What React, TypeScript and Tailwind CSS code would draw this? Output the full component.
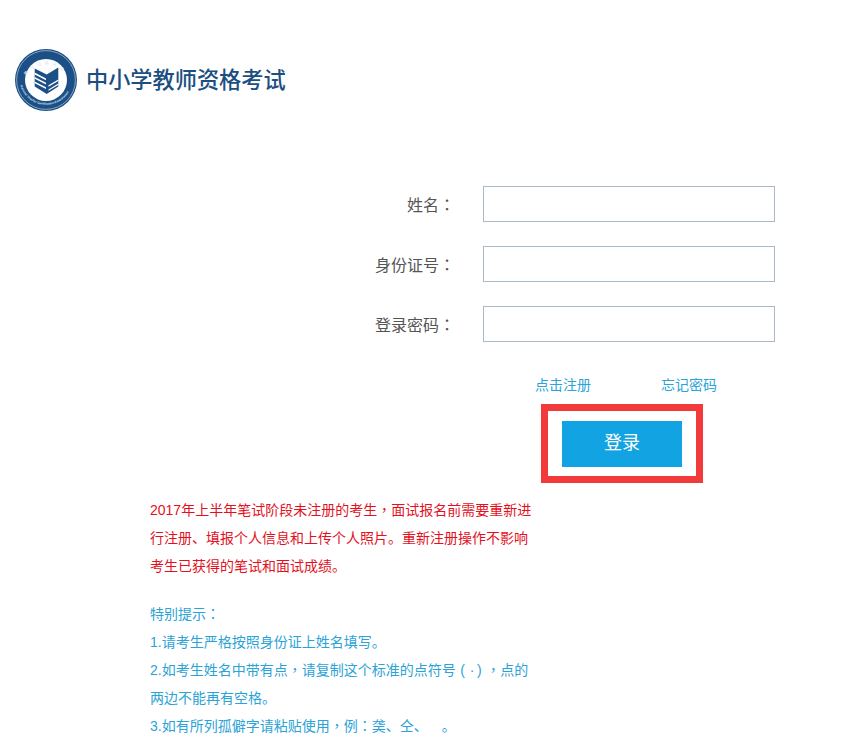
const fieldRows = ["姓名", "身份证号", "登录密码"]

// comma and colon sit centred in the reference, which is how the TC face draws them
function Mark({ children }: { children: string }) {
  return <span className="leading-none font-['Noto_Sans_CJK_TC',sans-serif]">{children}</span>
}

function Logo() {
  return (
    <svg width="64" height="64" viewBox="0 0 64 64" className="shrink-0">
      <circle cx="32" cy="32" r="31" fill="#1c4f86" />
      <circle cx="32" cy="32" r="29.4" fill="none" stroke="#cfdcea" strokeWidth="0.6" />
      <circle cx="32" cy="32" r="21" fill="#fff" />
      <defs>
        <path id="ring-top" d="M 8.5 36 A 24 24 0 0 1 55.5 36" />
        <path id="ring-bottom" d="M 5.5 34 A 26.8 26.8 0 0 0 58.5 34" />
      </defs>
      <text fill="#dbe6f1" fontSize="4.2" fontFamily="'Noto Sans CJK SC', sans-serif" letterSpacing="3.2">
        <textPath href="#ring-top" startOffset="14%">教师资格考试</textPath>
      </text>
      <text fill="#dbe6f1" fontSize="3" fontWeight="700" fontFamily="'Liberation Sans', sans-serif">
        <textPath href="#ring-bottom" startOffset="5%">National Teacher Certification Examination</textPath>
      </text>
      <path d="M20.7 20.6 L32.7 26.5 L44.3 19.6 V38.5 L32.7 46 L20.7 38.5 Z" fill="#1c4f86" />
      <path d="M20.7 24.6 L32 30.4 V32.2 L20.7 26.4 Z M20.7 29 L32 34.8 V36.6 L20.7 30.8 Z M20.7 33.4 L32 39.2 V41 L20.7 35.2 Z" fill="#fff" />
      <path d="M34.5 37.2 L44.3 31.5 V33 L34.5 38.7 Z M34.5 41.4 L44.3 35.6 V37 L34.5 42.8 Z" fill="#fff" />
    </svg>
  )
}

export default function App() {
  return (
    <div className="w-[842px] h-[753px] overflow-hidden bg-white [text-spacing-trim:space-all] font-['Liberation_Sans','Noto_Sans_CJK_SC',sans-serif]">
      <header className="flex items-center pl-[14px] pt-[48px] gap-[8px]">
        <Logo />
        <h1 className="pb-[4px] text-[22.2px] leading-[60px] font-medium text-[#1c4f80] font-['Noto_Sans_CJK_SC',sans-serif]">中小学教师资格考试</h1>
      </header>

      <div className="mt-[74px] flex flex-col gap-[24px]">
        {fieldRows.map((label) => (
          <div key={label} className="flex items-center h-[36px]">
            <label className="w-[455px] pt-[3px] text-right text-[16px] text-[#555555]">
              {label}
              <Mark>：</Mark>
            </label>
            <input className="ml-[28px] w-[292px] h-[36px] border border-[#a9b9c6] bg-white outline-none" />
          </div>
        ))}
      </div>

      <div className="mt-[32px] pl-[535px] flex gap-[70px] text-[14px] leading-[22px] text-[#2ba3d6]">
        <a>点击注册</a>
        <a>忘记密码</a>
      </div>

      <div className="mt-[8px] ml-[541px] w-[162px] h-[79px] border-[7px] border-[#f23a3a] flex items-center justify-center">
        <button className="w-[120px] h-[46px] bg-[#12a3e3] text-white text-[18px]">登录</button>
      </div>

      <div className="mt-[13px] pl-[150px] text-[14px] leading-[28px]">
        <p className="text-[#e3101e]">
          2017年上半年笔试阶段未注册的考生<Mark>，</Mark>面试报名前需要重新进<br />
          行注册、填报个人信息和上传个人照片。重新注册操作不影响<br />
          考生已获得的笔试和面试成绩。
        </p>
        <div className="mt-[20px] text-[#2ba3d6]">
          <p>特别提示<Mark>：</Mark></p>
          <p>1.请考生严格按照身份证上姓名填写。</p>
          <p>
            2.如考生姓名中带有点<Mark>，</Mark>请复制这个标准的点符号
            <span className="inline-block w-[14px] text-center">(</span>
            <span className="tracking-[-2px]">·</span>
            <span className="inline-block w-[14px] text-center">)</span>
            <Mark>，</Mark>点的<br />
            两边不能再有空格。
          </p>
          <p>3.如有所列孤僻字请粘贴使用<Mark>，</Mark>例<Mark>：</Mark>䶮、仝、<span className="inline-block w-[14px]" />。</p>
        </div>
      </div>
    </div>
  )
}
